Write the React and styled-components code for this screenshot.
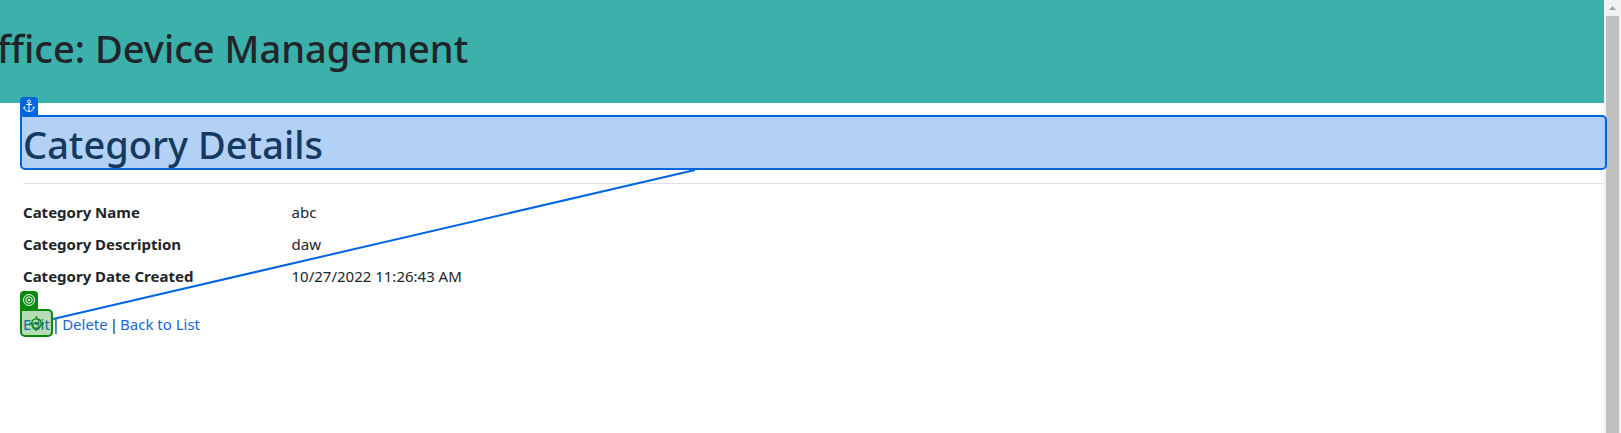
import React from "react";
import styled, { createGlobalStyle } from "styled-components";

const GlobalStyle = createGlobalStyle`
  *, *::before, *::after { box-sizing: border-box; }
  body {
    margin: 0;
    overflow: hidden;
    background: #fff;
    color: #212529;
    font-family: "Segoe UI", "Noto Sans", sans-serif;
    font-size: 15px;
    line-height: 24px;
  }
`;

const BLUE = "#0066de";
const GREEN = "#078a0b";

const Window = styled.div`
  display: grid;
  grid-template-columns: minmax(0, 1fr) 17px;
  min-height: 100vh;
`;

const Page = styled.div`
  position: relative;
  z-index: 1;
`;

const Heading = styled.h1`
  margin: 0;
  font-size: 38px;
  font-weight: 500;
  line-height: 48px;
  white-space: nowrap;
`;

const Banner = styled.header`
  overflow: hidden;
  padding: 24px 0 31px;
  background: #3cb0aa;

  ${Heading} {
    margin-left: -3px;
  }
`;

const Main = styled.main`
  padding: 17px 0 0 23px;
`;

const Anchored = styled.div`
  position: relative;
`;

const Marker = styled.span`
  position: absolute;
  inset: ${(p) => (p.$tone === GREEN ? "-3px -3px -1px" : "-5px -3px -2px")};
  border: 2px solid ${(p) => p.$tone};
  border-radius: 0 5px 5px 5px;
  background: ${(p) => p.$tone}4d;
  pointer-events: none;
`;

const Tag = styled.span`
  position: absolute;
  top: -20px;
  left: -2px;
  display: grid;
  place-items: center;
  width: 18px;
  height: 18px;
  border-radius: 4px 4px 0 0;
  background: ${(p) => p.$tone};
`;

const Crosshair = styled.svg`
  position: absolute;
  top: 5px;
  left: 7px;
`;

const Rule = styled.hr`
  height: 1px;
  margin: 15px 0 16px;
  border: 0;
  background: #e0e1e2;
`;

const Details = styled.dl`
  display: grid;
  grid-template-columns: minmax(0, 1fr) minmax(0, 5fr);
  row-gap: 8px;
  margin: 0 -12px 24px;
`;

const Term = styled.dt`
  padding: 0 12px;
  font-weight: 700;
  white-space: nowrap;
`;

const Value = styled.dd`
  margin: 0;
  padding: 0 13px;
`;

const Actions = styled.nav`
  display: flex;
  gap: 2px;
`;

const Link = styled.a`
  position: relative;
  color: #1b66d2;
  text-decoration: none;
`;

const Connector = styled.svg`
  position: absolute;
  top: 170px;
  left: 53px;
  pointer-events: none;
`;

const Scrollbar = styled.div`
  display: flex;
  flex-direction: column;
  padding: 0 2px;
  background: #f1f1f1;
`;

const Arrow = styled.svg`
  display: block;
  width: 13px;
  height: 16px;
`;

const Thumb = styled.div`
  flex: 1;
  background: #c1c1c1;
`;

function AnchorIcon() {
  return (
    <svg width="12" height="14" viewBox="0 0 12 14" fill="none" stroke="#fff" aria-hidden="true">
      <circle cx="6" cy="2.5" r="1.5" />
      <path d="M6 4v8.5M3 5.5h6" />
      <path d="M1.2 8v1.2c.5 2 2.5 3.2 4.8 3.2s4.3-1.2 4.8-3.2V8M.7 9.2l.6-1.4 1.2.9M11.3 9.2l-.6-1.4-1.2.9" />
    </svg>
  );
}

function TargetIcon() {
  return (
    <svg width="14" height="14" viewBox="0 0 14 14" fill="none" stroke="#fff" aria-hidden="true">
      <circle cx="7" cy="7" r="5.5" />
      <circle cx="7" cy="7" r="3.2" />
      <circle cx="7" cy="7" r="1.2" fill="#fff" stroke="none" />
    </svg>
  );
}

const details = [
  ["Category Name", "abc"],
  ["Category Description", "daw"],
  ["Category Date Created", "10/27/2022 11:26:43 AM"],
];

export default function App() {
  return (
    <>
      <GlobalStyle />
      <Window>
        <Page>
          <Banner>
            <Heading>ffice: Device Management</Heading>
          </Banner>
          <Main>
            <Anchored>
              <Heading>Category Details</Heading>
              <Marker $tone={BLUE}>
                <Tag $tone={BLUE}><AnchorIcon /></Tag>
              </Marker>
            </Anchored>
            <Rule />
            <Details>
              {details.map(([term, value]) => (
                <React.Fragment key={term}>
                  <Term>{term}</Term>
                  <Value>{value}</Value>
                </React.Fragment>
              ))}
            </Details>
            <Actions>
              <Link href="#edit">
                Edit
                <Marker $tone={GREEN}>
                  <Tag $tone={GREEN}><TargetIcon /></Tag>
                  <Crosshair width="15" height="15" viewBox="0 0 15 15" fill="none" stroke={GREEN} strokeWidth="1.5" aria-hidden="true">
                    <circle cx="7.5" cy="7.5" r="4.8" />
                    <circle cx="7.5" cy="7.5" r="1.5" fill={GREEN} stroke="none" />
                    <path d="M7.5 0v3M7.5 12v3M0 7.5h3M12 7.5h3" />
                  </Crosshair>
                </Marker>
              </Link>
              <span>|</span>
              <Link href="#delete">Delete</Link>
              <span>|</span>
              <Link href="#list">Back to List</Link>
            </Actions>
          </Main>
          <Connector width="643" height="151" viewBox="0 0 643 151" aria-hidden="true">
            <path d="M0 149L642 0" stroke={BLUE} strokeWidth="2" />
          </Connector>
        </Page>
        <Scrollbar aria-hidden="true">
          <Arrow viewBox="0 0 13 16">
            <path d="M3 10L6.5 6 10 10z" fill="#a3a3a3" />
          </Arrow>
          <Thumb />
        </Scrollbar>
      </Window>
    </>
  );
}
